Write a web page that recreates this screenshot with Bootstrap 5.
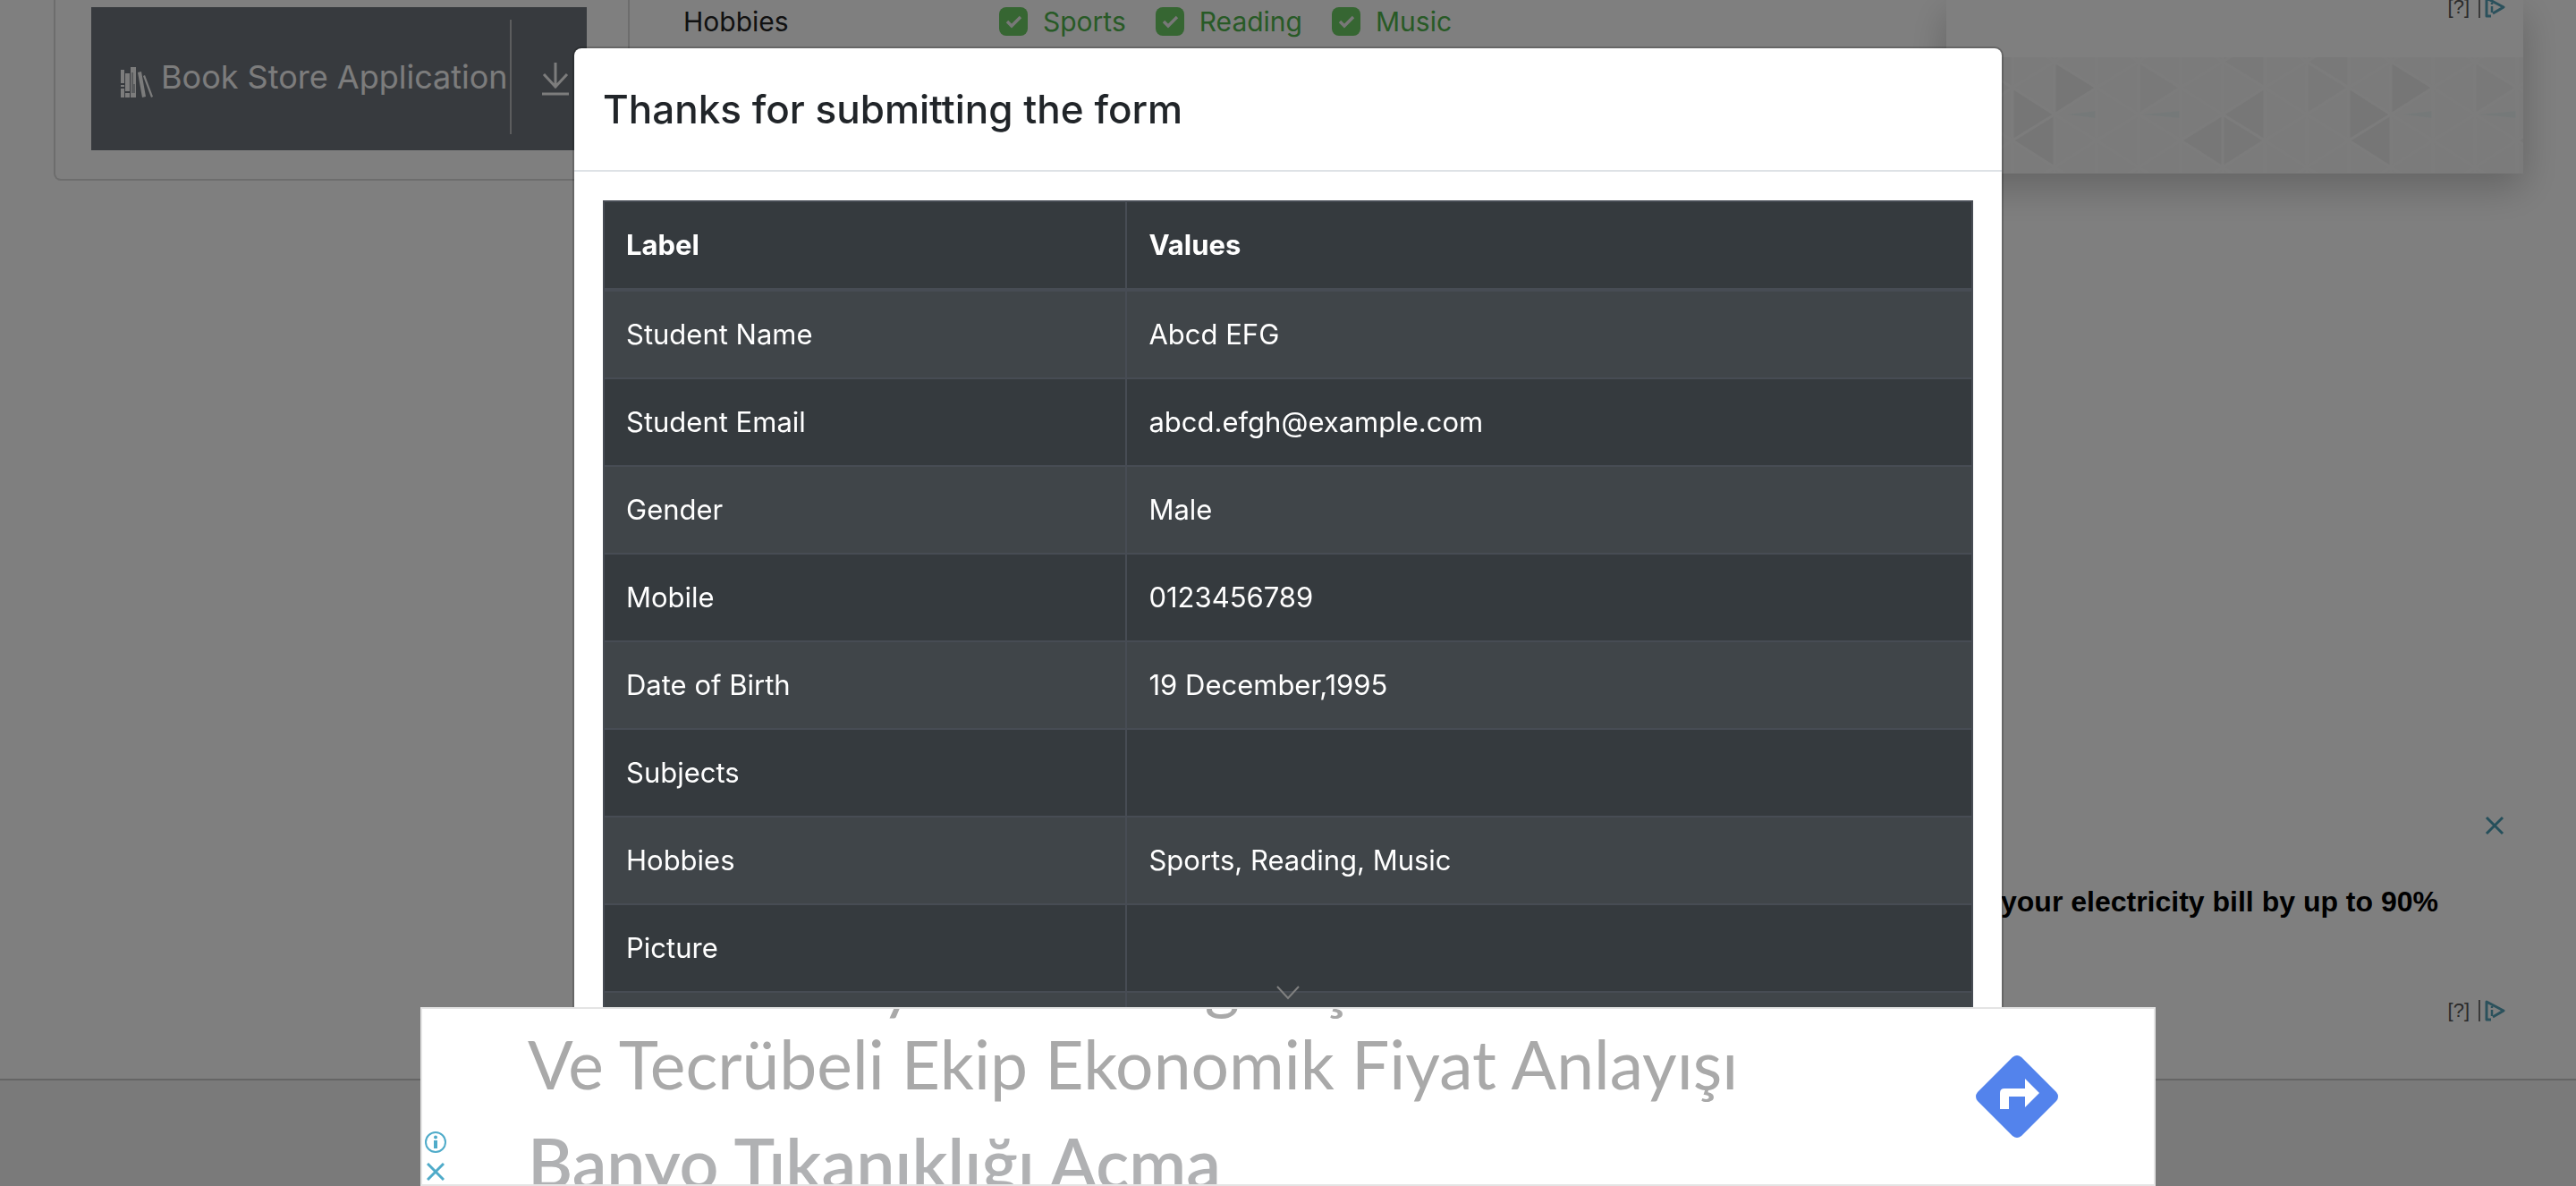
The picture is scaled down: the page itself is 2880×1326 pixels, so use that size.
<!DOCTYPE html>
<html lang="en">
<head>
<meta charset="utf-8">
<meta name="viewport" content="width=device-width, initial-scale=1">
<title>Practice Form</title>
<link href="https://cdn.jsdelivr.net/npm/bootstrap@5.3.0/dist/css/bootstrap.min.css" rel="stylesheet">
<style>
  :root { font-size: 32px; --bs-border-width: 2px; }
  body { font-family: Inter, "Noto Sans", sans-serif; font-size: 31px; line-height: 48px; color: #212529; background: #fff; }
  .page { height: 100vh; overflow: hidden; }
  .line-color { border-color: #dadada !important; }

  /* left menu */
  .menu-col { flex: 0 0 704px; padding-left: 60px; }
  .menu-panel { border-top: 0; border-radius: 0 0 8px 8px; padding: 8px 46px 32px 40px; }
  .menu-head { height: 160px; background: #6f757d; color: #f8f8f8; font-size: 36px; padding-left: 32px; padding-bottom: 4px; text-decoration: none; }
  .menu-head .books { width: 38px; height: 36px; margin: 12px 8px 0 0; }
  .menu-head .divider { width: 2px; height: 128px; background: #b8babc; margin-left: 2px; }
  .menu-head .arrow { width: 30px; height: 42px; margin: 4px 20px 0 auto; }

  /* form */
  .form-col { padding-left: 60px; font-size: 30px; }
  .form-col .label-col { width: 353px; color: #222; }
  .form-col .form-check { min-height: 0; padding: 0; margin: 0 33px 0 0; }
  .form-col .form-check-input { float: none; width: 32px; height: 32px; margin: 0 17px 0 0; border: 0; border-radius: 8px; }
  .form-col .form-check-input:checked { background-color: #6ccc64; background-size: 32px 32px;
    background-image: url("data:image/svg+xml,%3csvg xmlns='http://www.w3.org/2000/svg' viewBox='0 0 32 32'%3e%3cpath d='M9 16l5 5 10-10' fill='none' stroke='%23f0f0f0' stroke-width='3.4'/%3e%3c/svg%3e"); }
  .form-col .form-check-label { color: #50b44c; }

  /* advertisements in the right column */
  .ads-col { flex: 0 0 704px; padding-right: 59px; }
  .ad-top { height: 194px; box-shadow: 0 16px 40px rgba(0,0,0,.22); background: #fff; }
  .ad-marks { height: 24px; padding-right: 20px; gap: 10px; font: 22px/24px "Liberation Sans", Arial, sans-serif; color: #555; }
  .ad-marks svg { width: 30px; height: 24px; }
  .ad-top .ad-marks { margin-top: -4px; }
  .ad-mid { margin-bottom: 64px; }
  .ad-mid .x-mark { width: 22px; height: 22px; margin-right: 21px; }
  .ad-mid .headline { font: bold 32px/40px "Liberation Sans", Arial, sans-serif; color: #000; margin: 54px 95px 90px 0; }

  .foot { height: 120px; background: #f4f4f4; border-top: 2px solid #cacaca; }

  /* result window */
  .modal { overflow: hidden; }
  .modal-dialog { max-width: 1600px; margin: 52px auto; }
  .modal-content { border-color: rgba(0,0,0,.2); border-radius: 10px; --bs-modal-border-width: 2px; }
  .modal-title { font-size: 44px; line-height: 72px; font-weight: 500; }
  .result { --bs-table-bg: #353a3e; --bs-table-striped-bg: #404549; --bs-table-striped-color: #fff; --bs-table-border-color: #474c54; border-color: #474c54; }
  .result > * > tr > * { padding: 24px; height: 98px; border-width: 2px; background-color: #353a3e; color: #fff; }
  .result > thead > tr > th { border-bottom-width: 4px; font-weight: 700; }
  .result > tbody > tr:nth-child(odd) > td { background-color: #404549; }
  .result .c-label { width: 38.2%; }

  /* banner at the bottom */
  .banner { z-index: 1080; max-width: 1940px; height: 200px; background: #fff; border: 2px solid #e4e4e4; }
  .banner .handle { position: absolute; left: 50%; top: -26px; width: 28px; height: 16px; transform: translateX(-50%); border: 0; padding: 0; background: none; display: flex; }
  .banner .corner { width: 30px; gap: 11px; padding: 0 0 4px 0; }
  .banner .copy { font-family: Lato, "Open Sans", sans-serif; font-size: 75px; line-height: 110px; color: #a9a9a9; padding-left: 88px; overflow: hidden; white-space: nowrap; }
  .banner .copy .cut { margin: -87px 0 -17px; padding-left: 395px; }
  .banner .copy .gap-a { width: 323px; }
  .banner .copy .gap-b { width: 92px; }
  .banner .copy .second { font-size: 77px; font-weight: 600; color: #b0b1b3; }
  .banner .go { width: 92px; height: 92px; margin-right: 107px; }
</style>
</head>
<body>
<div class="page d-flex flex-column">
  <div class="d-flex flex-grow-1">
    <aside class="menu-col">
      <div class="menu-panel border line-color border-top-0">
        <a href="#" class="menu-head d-flex align-items-center">
          <svg class="books align-self-center" viewBox="0 0 38 36" fill="#f8f8f8" aria-hidden="true">
            <path d="M1 4h4v15H1zM1 21h4v2H1zM1 25h4v10H1zM6 8h5v20H6zM6 30h5v5H6zM12 1h6v34h-6zM20 7l4-1 5 28-4 1zM26 11l2-1 9 24-2 1z"/>
            <path d="M14 7v23M16 20v10" stroke="#6f757d" fill="none"/>
          </svg>
          <span class="text-nowrap">Book Store Application</span>
          <span class="divider"></span>
          <svg class="arrow" viewBox="0 0 30 42" fill="none" stroke="#f8f8f8" stroke-width="3" aria-hidden="true"><path d="M15 3v28M2 16l13 14 13-14M0 38h30"/></svg>
        </a>
      </div>
    </aside>
    <main class="form-col flex-grow-1">
      <div class="d-flex">
        <span class="label-col">Hobbies</span>
        <div class="form-check d-flex align-items-center"><input class="form-check-input" type="checkbox" id="h1" checked><label class="form-check-label" for="h1">Sports</label></div>
        <div class="form-check d-flex align-items-center"><input class="form-check-input" type="checkbox" id="h2" checked><label class="form-check-label" for="h2">Reading</label></div>
        <div class="form-check d-flex align-items-center"><input class="form-check-input" type="checkbox" id="h3" checked><label class="form-check-label" for="h3">Music</label></div>
      </div>
    </main>
    <aside class="ads-col d-flex flex-column">
      <div class="ad-top d-flex flex-column justify-content-between">
        <div class="ad-marks d-flex justify-content-end"><span>[?]</span>
          <svg viewBox="0 0 30 24" fill="none" stroke="#57a3b8" stroke-width="3"><path d="M1 0v24" stroke="#777" stroke-width="2"/><path d="M14 22l-5 0V2l19 10-12 7" stroke-linejoin="round"/><path d="M15 7v2M15 11v7" stroke-width="2.5"/></svg>
        </div>
        <svg width="100%" height="130" viewBox="0 0 645 130" preserveAspectRatio="xMinYMin slice" aria-hidden="true">
          <defs>
            <pattern id="mesh" x="74" y="34" width="94" height="59" patternUnits="userSpaceOnUse">
              <path d="M0 0v59M94 0v59M47 0v59M0 0l47 30L94 0M0 59l47-29 47 29M0 0L47-30M94 0L47-30" fill="none" stroke="#f9f9f9" stroke-width="3"/>
            </pattern>
            <g id="tiles">
              <path d="M121 5v59l47-30zM74 34v59l47-29zM121 64v59L74 93z" fill="#ececec"/>
              <path d="M309 64l47-30v59zM262 93l47-29 47 29-47 30z" fill="#efefef"/>
              <path d="M309 5V0h47v34zM403 5V0h47v34zM215 5l47 29-47 30zM403 5l47 29-47 30z" fill="#f3f3f3"/>
              <path d="M135 64l33-4v8zM220 64l42-4v8z" fill="#ebf3f3"/>
            </g>
          </defs>
          <rect width="645" height="130" fill="#f6f6f6"/>
          <use href="#tiles"/><use href="#tiles" x="376"/><use href="#tiles" x="-376"/>
          <rect width="645" height="130" fill="url(#mesh)"/>
        </svg>
      </div>
      <div class="ad-mid mt-auto d-flex flex-column align-items-end">
        <svg class="x-mark" viewBox="0 0 22 22" stroke="#4a9fb6" stroke-width="3"><path d="M2 2l18 18M20 2L2 20"/></svg>
        <div class="headline text-nowrap">your electricity bill by up to 90%</div>
        <div class="ad-marks d-flex justify-content-end"><span>[?]</span>
          <svg viewBox="0 0 30 24" fill="none" stroke="#57a3b8" stroke-width="3"><path d="M1 0v24" stroke="#777" stroke-width="2"/><path d="M14 22l-5 0V2l19 10-12 7" stroke-linejoin="round"/><path d="M15 7v2M15 11v7" stroke-width="2.5"/></svg>
        </div>
      </div>
    </aside>
  </div>
  <footer class="foot flex-shrink-0"></footer>
</div>

<div class="modal-backdrop show"></div>
<div class="modal d-block" role="dialog" aria-labelledby="ttl">
  <div class="modal-dialog">
    <div class="modal-content">
      <div class="modal-header"><h4 class="modal-title" id="ttl">Thanks for submitting the form</h4></div>
      <div class="modal-body">
        <table class="table table-dark table-striped table-bordered result mb-0">
          <thead><tr><th class="c-label">Label</th><th>Values</th></tr></thead>
          <tbody>
            <tr><td>Student Name</td><td>Abcd EFG</td></tr>
            <tr><td>Student Email</td><td>abcd.efgh@example.com</td></tr>
            <tr><td>Gender</td><td>Male</td></tr>
            <tr><td>Mobile</td><td>0123456789</td></tr>
            <tr><td>Date of Birth</td><td>19 December,1995</td></tr>
            <tr><td>Subjects</td><td></td></tr>
            <tr><td>Hobbies</td><td>Sports, Reading, Music</td></tr>
            <tr><td>Picture</td><td></td></tr>
            <tr><td></td><td></td></tr>
          </tbody>
        </table>
      </div>
    </div>
  </div>
</div>

<div class="banner fixed-bottom mx-auto d-flex">
  <button class="handle" type="button" aria-label="Collapse"><svg width="28" height="16" viewBox="0 0 28 16" fill="none" stroke="#808080" stroke-width="2"><path d="M2 1l12 13L26 1"/></svg></button>
  <div class="corner d-flex flex-column justify-content-end align-items-center">
    <svg width="24" height="24" viewBox="0 0 24 24" fill="none" stroke="#4fabc9"><circle cx="12" cy="12" r="11" stroke-width="2"/><circle cx="12" cy="6.5" r="2" fill="#4fabc9" stroke="none"/><path d="M12 10v9" stroke-width="4"/></svg>
    <svg width="20" height="20" viewBox="0 0 20 20" stroke="#4fabc9" stroke-width="3"><path d="M1 1l18 18M19 1L1 19"/></svg>
  </div>
  <div class="copy flex-grow-1">
    <div class="cut d-flex"><span>y</span><span class="gap-a"></span><span>g</span><span class="gap-b"></span><span>ş</span></div>
    <div>Ve Tecrübeli Ekip Ekonomik Fiyat Anlayışı</div>
    <div class="second">Banyo Tıkanıklığı Açma</div>
  </div>
  <svg class="go align-self-center" viewBox="0 0 92 92"><path d="M41 2q5-4 10 0l39 39q4 5 0 10L51 90q-5 4-10 0L2 51q-4-5 0-10z" fill="#5383ec"/><path d="M27 60V42q0-5 5-5h23V26l16 16-16 16V46H37v14z" fill="#fff"/></svg>
</div>
<script src="https://cdn.jsdelivr.net/npm/bootstrap@5.3.0/dist/js/bootstrap.bundle.min.js"></script>
</body>
</html>
